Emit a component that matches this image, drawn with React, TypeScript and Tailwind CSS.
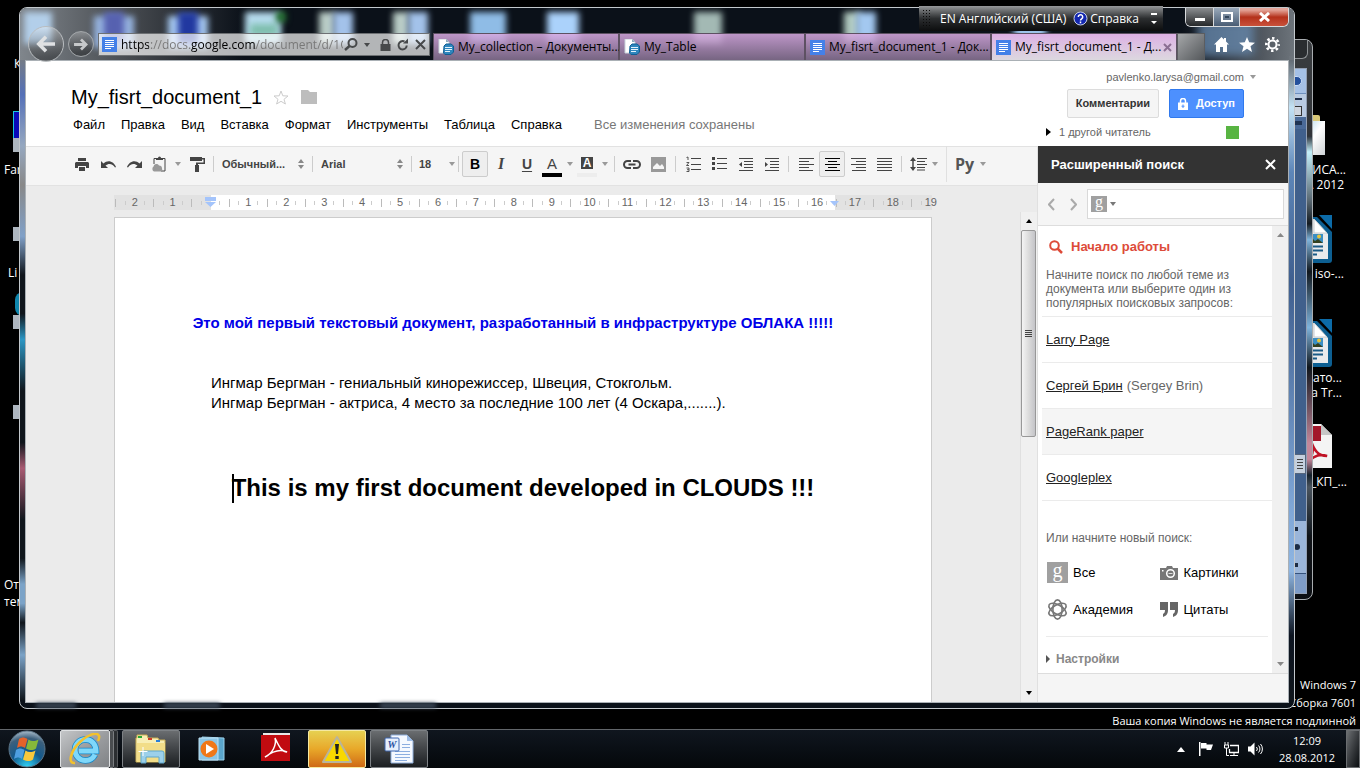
import type { ReactNode } from "react";

type Kids = { children?: ReactNode };

/* ---------- small shared glyphs ---------- */

function Caret({ className = "text-[#999]" }: { className?: string }) {
  return (
    <svg width="6" height="4" viewBox="0 0 6 4" className={"shrink-0 " + className} fill="currentColor" aria-hidden="true">
      <path d="M0 0h6L3 4z" />
    </svg>
  );
}

function UpDown() {
  return (
    <svg width="6" height="10" viewBox="0 0 6 10" fill="#888" className="pointer-events-none shrink-0" aria-hidden="true">
      <path d="M0 4h6L3 0zM0 6h6L3 10z" />
    </svg>
  );
}

function DocIcon() {
  return (
    <svg width="15" height="15" viewBox="0 0 15 15" className="shrink-0" aria-hidden="true">
      <rect width="15" height="15" fill="#4480e8" />
      <path d="M3 3.500h9M3 5.500h9M3 7.500h9M3 9.500h9M3 11.500h6" stroke="#fff" />
    </svg>
  );
}

function CollectionIcon() {
  return (
    <svg width="16" height="16" viewBox="0 0 16 16" className="shrink-0" aria-hidden="true">
      <path d="M1 0h7l3 3v11H1z" fill="#fff" stroke="#c9d4dc" />
      <path d="M8 0l3 3H8z" fill="#8ea9bc" />
      <path d="M6 7l2-2h5l2.500 2v6L13 15.500H7L5.500 14z" fill="#2f86bd" stroke="#0f5f94" />
      <path d="M7 8.500h7M7 10.500h7M7 12.500h5" stroke="#e4f3fc" />
    </svg>
  );
}

/* ---------- desktop behind the windows ---------- */

function WriterIcon() {
  return (
    <svg width="36" height="48" viewBox="0 0 36 48" aria-hidden="true">
      <path d="M2 2h18l15 15v28q0 3-3 3H2z" fill="#0d5f92" />
      <path d="M22 0h13v14z" fill="#0c6ba8" />
      <path d="M0 4h17l14 15v25H0z" fill="#e9eaec" />
      <path d="M17 4v14h13z" fill="#fff" stroke="#c8ccd0" />
      <rect x="8" y="19" width="18" height="9" fill="#3b8fc4" />
      <path d="M8 28l6-6 4 4 3-2 5 4z" fill="#33401f" />
      <circle cx="22" cy="21.500" r="2" fill="#e7c53c" />
      <path d="M4 31.500h22M4 35.500h22M4 39.500h16" stroke="#1a5a86" strokeWidth="2" />
    </svg>
  );
}

function PdfIcon() {
  return (
    <svg width="32" height="46" viewBox="0 0 32 46" aria-hidden="true">
      <path d="M0 1h20l11 11v33H0z" fill="#f4f4f4" />
      <path d="M20 1v11h11z" fill="#c6c6c6" />
      <rect width="20" height="15" y="3" fill="#a3172a" />
      <path d="M10 18c3 9 7 15 16 15-8-3-14 0-20 7 5-5 8-14 4-22z" fill="none" stroke="#c01225" strokeWidth="2.500" />
    </svg>
  );
}

function DesktopIcons() {
  const label = "absolute whitespace-nowrap text-xs leading-4 text-white ";
  return (
    <div className="absolute inset-0 overflow-hidden">
      <span className={label + "left-3.5 top-14"}>К</span>
      <div className="absolute left-[13px] top-[111px] h-7 w-4 border border-[#19c8e0] bg-[#0909b8]" />
      <div className="absolute left-[13px] top-[138px] h-3.5 w-4 bg-[#aeb6bf]" />
      <span className={label + "left-1 top-[162px]"}>Far</span>
      <div className="absolute left-[13px] top-[227px] h-3.5 w-4 bg-[#aeb6bf]" />
      <span className={label + "left-2 top-[265px]"}>Li</span>
      <div className="absolute left-[15px] top-[292px] h-6 w-4 rounded-full bg-[#0f86ad]" />
      <div className="absolute left-[13px] top-[315px] h-3.5 w-4 bg-[#aeb6bf]" />
      <div className="absolute left-[13px] top-[405px] h-3.5 w-4 bg-[#aeb6bf]" />
      <span className={label + "left-1 top-[577px]"}>От</span>
      <span className={label + "left-1 top-[594px]"}>тем</span>

      <div className="absolute right-[34px] top-[115px] h-6 w-4 rounded-xs bg-[#d9c878] mr-1.5" />
      <div className="absolute right-[35px] top-[121px] h-[34px] w-6 bg-linear-to-br from-[#9fd0e6] via-white to-[#cfd3d6]" />
      <span className={label + "right-3.5 top-[162px]"}>ИСА...</span>
      <span className={label + "right-4 top-[177px]"}>А 2012</span>
      <div className="absolute right-[27px] top-[215px]"><WriterIcon /></div>
      <span className={label + "right-4 top-[266px]"}>iso-...</span>
      <div className="absolute right-[27px] top-[319px]"><WriterIcon /></div>
      <span className={label + "right-[18px] top-[370px]"}>рато...</span>
      <span className={label + "right-[18px] top-[385px]"}>а Tr...</span>
      <div className="absolute right-[27px] top-[423px]"><PdfIcon /></div>
      <span className={label + "right-[13px] top-[474px]"}>_КП_...</span>

      <div className="absolute bottom-0 right-1 text-right text-[11px] text-white">
        <p className="leading-[18px]">Windows 7</p>
        <p className="leading-[18px]">Сборка 7601</p>
        <p className="leading-[17px]">Ваша копия Windows не является подлинной</p>
      </div>
    </div>
  );
}

function BackWindow() {
  return (
    <div className="absolute bottom-[129px] right-[47px] top-[39px] w-40 rounded-lg border border-[#a9adb0] bg-linear-to-b from-[#3a3d40] via-[#20242a] to-[#0c0f13] pr-1">
      <div className="ml-auto h-[19px] w-24 rounded-b-md border border-t-0 border-[#8f9396] bg-[#2a2d30]" />
      <div className="absolute bottom-[5px] right-[5px] top-7 flex w-3.5 flex-col items-center border border-[#93a0b4] bg-[#40608c]">
        <div className="flex h-6 w-full items-center bg-[#a5c1e6]"><i className="h-2.5 w-2 rounded-r-full border border-[#c8dcf6] bg-[#24509c]" /></div>
        <div className="h-6 w-full border-t border-[#6f90bd] bg-[#b9cbe2] pt-1"><i className="block h-0.5 w-2 bg-[#20304c]" /><i className="mt-1.5 block h-2.5 w-2 border border-[#333] bg-[#cfd6e0]" /></div>
        <div className="h-3 w-full bg-[#4a6a98] pt-1"><i className="block h-1 w-2 bg-[#1f3454]" /></div>
        <div className="flex-1" />
        <div className="flex h-5 w-3 flex-col justify-center gap-0.5 border border-[#55657c] bg-[#c5d0de] px-0.5">
          <i className="h-px bg-[#444]" /><i className="h-px bg-[#444]" /><i className="h-px bg-[#444]" /><i className="h-px bg-[#444]" />
        </div>
        <div className="h-[47px]" />
        <div className="flex h-13 w-full flex-col items-start justify-around bg-[#9bb6da]">
          <i className="size-1 bg-[#1c2c44]" /><i className="size-1.5 rounded-full bg-[#1c2c44]" /><i className="size-1 bg-[#1c2c44]" />
        </div>
        <div className="h-5 w-full border-t border-[#35527c] bg-[#7f9dc8]" />
      </div>
      <div className="absolute bottom-16 right-0 top-24 w-[5px] bg-linear-[180deg,#2a3038_0%,#c4f0fa_4%,#5b6a74_16%,#141a20_22%,#7fb4dc_26%,#10161c_34%,#7fb4dc_48%,#10161c_58%,#c4879a_77%,#c4879a_81%,#14202a_85%,#4a545e_88%,#10161c_100%]" />
    </div>
  );
}

/* ---------- browser frame ---------- */

function GlassBlobs() {
  const blob = "absolute h-8 blur-[3px] ";
  return (
    <div className="absolute inset-0 overflow-hidden rounded-t-md" aria-hidden="true">
      <div className="absolute inset-y-0 left-0 w-56 bg-linear-to-r from-[#80868c] via-[#45494e] to-transparent" />
      <div className={blob + "left-1 top-1 w-7 bg-[#b3cfea]"} />
      <div className={blob + "left-[74px] top-2 w-10 bg-[#97b4e0]"} />
      <div className={blob + "left-[84px] top-1 w-5 bg-[#5661b0]"} />
      <div className={blob + "left-[148px] top-2 w-10 bg-[#a6c9f2]"} />
      <div className={blob + "left-[158px] top-1 w-5 bg-[#2138a0]"} />
      <div className={blob + "left-[225px] top-1 w-9 bg-[#b7dcee]"} />
      <div className="absolute left-[230px] top-4 h-3 w-7 bg-[#7fbfae] blur-[3px]" />
      <div className="absolute left-[256px] top-1 h-2.5 w-2.5 bg-[#1c6b28] blur-[3px]" />
      <div className={blob + "left-[299px] top-1 w-4 bg-[#b9ccc6]"} />
      <div className={blob + "left-[313px] top-1 w-5 bg-[#a3c2ea]"} />
      <div className={blob + "left-[373px] top-1 w-4 bg-[#b9ccc6]"} />
      <div className={blob + "left-[388px] top-1 w-5 bg-[#a3c2ea]"} />
      <div className={blob + "left-[450px] top-1 w-9 bg-[#8fbce6]"} />
      <div className={blob + "left-[527px] top-1 w-8 bg-[#abd2fb]"} />
      <div className={blob + "left-[674px] top-1 w-7 bg-[#a3b9b4]"} />
      <div className={blob + "left-[824px] top-1 w-4 bg-[#b0c9bf]"} />
      <div className={blob + "left-[836px] top-1 w-5 bg-[#a3c8f0]"} />
      <div className={blob + "left-[994px] top-1 w-8 bg-[#9cc4ea]"} />
      <div className="absolute inset-y-0 right-0 w-28 bg-linear-to-r from-transparent to-[#6d747b]" />
      <div className="absolute right-10 top-3 h-9 w-14 bg-[#6e93bb] opacity-70 blur-[5px]" />
    </div>
  );
}

function NavButtons() {
  return (
    <div className="flex items-center gap-1">
      <button aria-label="Назад" className="flex size-9 items-center justify-center rounded-full border border-[#b9bdc0] bg-linear-to-b from-[#ffffff55] to-[#00000055]">
        <svg width="20" height="18" viewBox="0 0 22 20" fill="none" stroke="#dfe1e3" strokeWidth="4"><path d="M21 10H4M11 2l-8 8 8 8" /></svg>
      </button>
      <button aria-label="Вперед" className="flex size-[26px] items-center justify-center rounded-full border border-[#a4a8ab] bg-linear-to-b from-[#ffffff44] to-[#00000055]">
        <svg width="14" height="13" viewBox="0 0 15 14" fill="none" stroke="#c6c8ca" strokeWidth="3"><path d="M0 7h12M7.500 1.500L13 7l-5.500 5.500" /></svg>
      </button>
    </div>
  );
}

function AddressBar() {
  return (
    <form className="ml-1 flex h-[23px] w-[332px] items-center border border-[#6d7073] bg-[#ffffffb0] px-[3px]" onSubmit={(e) => e.preventDefault()}>
      <DocIcon />
      <input
        aria-label="Адрес"
        defaultValue="https://docs.google.com/document/d/1Q"
        className="ml-1 w-[222px] min-w-0 bg-linear-[90deg,#000_28px,#777_28px,#777_70px,#000_70px,#000_135px,#777_135px] bg-clip-text text-xs text-transparent outline-none"
      />
      <div className="ml-auto flex items-center gap-1.5 text-[#47494b]">
        <button aria-label="Поиск" className="flex items-center gap-1.5">
          <svg width="14" height="13" viewBox="0 0 14 13" fill="none" stroke="currentColor" strokeWidth="2"><circle cx="8.500" cy="5" r="4" /><path d="M5.500 8L1 12" strokeWidth="2.500" /></svg>
          <Caret className="text-[#47494b]" />
        </button>
        <svg width="11" height="12" viewBox="0 0 11 12" fill="currentColor" className="ml-1" aria-hidden="true"><path d="M.5 5h10v7H.5z" /><path d="M2.500 5V3.500a3 3 0 016 0V5" fill="none" stroke="currentColor" strokeWidth="1.500" /></svg>
        <button aria-label="Обновить">
          <svg width="12" height="13" viewBox="0 0 12 13" fill="none" stroke="currentColor" strokeWidth="2"><path d="M7.500 3.500A4.200 4.200 0 105.500 11.500a4.200 4.200 0 004.200-4" /><path d="M6 5.500h5V.5z" fill="currentColor" stroke="none" /></svg>
        </button>
        <button aria-label="Остановить">
          <svg width="11" height="11" viewBox="0 0 11 11" stroke="currentColor" strokeWidth="2"><path d="M1 1l9 9M10 1l-9 9" /></svg>
        </button>
      </div>
    </form>
  );
}

function Tab({ icon, label, active }: { icon: ReactNode; label: string; active?: boolean }) {
  return (
    <div
      className={
        "flex h-[27px] w-[186px] min-w-0 items-center border border-b-0 border-[#5d5162] text-xs text-black " +
        (active ? "bg-linear-to-b from-[#dcb0e4] to-[#dcd8df]" : "bg-linear-to-b from-[#d6a8e0e0] to-[#8a7495d8]")
      }
    >
      <button className="flex min-w-0 flex-1 items-center gap-1 pl-1">
        {icon}
        <span className="whitespace-nowrap">{label}</span>
      </button>
      {active && (
        <button aria-label="Закрыть вкладку" className="pr-1">
          <svg width="9" height="9" viewBox="0 0 9 9" stroke="#8b6f93" strokeWidth="2"><path d="M1 1l7 7M8 1L1 8" /></svg>
        </button>
      )}
    </div>
  );
}

function WindowButtons() {
  const b = "flex h-[18px] items-center justify-center border-r border-[#d8dadc] ";
  return (
    <div className="absolute right-[5px] top-0 flex overflow-hidden rounded-b-md border border-t-0 border-[#d8dadc]">
      <button aria-label="Свернуть" className={b + "w-7 bg-linear-to-b from-[#8b8e91] to-[#27292b]"}>
        <span className="mt-1 h-[3px] w-2.5 bg-white" />
      </button>
      <button aria-label="Развернуть" className={b + "w-[26px] bg-linear-to-b from-[#9aa9ba] to-[#4a5d74]"}>
        <span className="flex h-2.5 w-3 items-center justify-center border-2 border-white"><i className="h-0.5 w-1 bg-[#33465c]" /></span>
      </button>
      <button aria-label="Закрыть" className="flex h-[18px] w-12 items-center justify-center bg-linear-to-b from-[#e4a59a] from-10% via-[#b4301a] via-50% to-[#c9513a]">
        <svg width="11" height="10" viewBox="0 0 11 10" stroke="#fff" strokeWidth="3"><path d="M1 1l9 8M10 1L1 9" /></svg>
      </button>
    </div>
  );
}

function BrowserChrome() {
  return (
    <div className="relative h-[52px] shrink-0">
      <GlassBlobs />
      <div className="relative flex h-full items-end pl-2">
        <div className="-mb-0.5 self-end"><NavButtons /></div>
        <div className="mb-1"><AddressBar /></div>
        <div className="ml-[3px] flex min-w-0 items-end">
          <Tab icon={<CollectionIcon />} label="My_collection – Документы..." />
          <Tab icon={<CollectionIcon />} label="My_Table" />
          <Tab icon={<DocIcon />} label="My_fisrt_document_1 - Док..." />
          <Tab icon={<DocIcon />} label="My_fisrt_document_1 - Д..." active />
          <button aria-label="Новая вкладка" className="h-[27px] w-7 border border-b-0 border-[#5b5d60] bg-linear-to-br from-[#a6a8aa] to-[#55585b]" />
        </div>
        <div className="mb-2 ml-auto flex items-center gap-2.5 pr-3.5 text-white">
          <button aria-label="Домой"><svg width="15" height="15" viewBox="0 0 15 15" fill="currentColor"><path d="M7.500 0L0 7.500h2V15h4v-5h3v5h4V7.500h2L12 4.500V1h-2v1.500z" /></svg></button>
          <button aria-label="Избранное"><svg width="16" height="15" viewBox="0 0 16 15" fill="currentColor"><path d="M8 0l2.200 5.300 5.800.4-4.500 3.600L13 15l-5-3.200L3 15l1.500-5.700L0 5.700l5.800-.4z" /></svg></button>
          <button aria-label="Сервис"><svg width="15" height="15" viewBox="0 0 15 15" fill="none" stroke="currentColor"><circle cx="7.500" cy="7.500" r="4" strokeWidth="2" /><circle cx="7.500" cy="7.500" r="6.200" strokeWidth="2.600" strokeDasharray="2.400 2.470" strokeDashoffset="1.200" /></svg></button>
        </div>
      </div>
      <WindowButtons />
    </div>
  );
}

function LanguageBar() {
  return (
    <div className="absolute right-[197px] top-1.5 flex h-[25px] w-[244px] items-center bg-linear-to-b from-[#96989a] via-[#2c2e30] via-50% to-[#0c0d0e] px-1 text-xs text-white">
      <svg width="9" height="17" viewBox="0 0 9 17" stroke="#0b0b0b" strokeDasharray="1 2" aria-hidden="true">
        <path d="M0 .5h9M0 3.500h9M0 6.500h9M0 9.500h9M0 12.500h9M0 15.500h9" />
      </svg>
      <button className="ml-2 whitespace-nowrap">EN Английский (США)</button>
      <button className="ml-auto flex items-center gap-0.5">
        <svg width="15" height="15" viewBox="0 0 15 15" aria-hidden="true">
          <circle cx="7.500" cy="7.500" r="6.500" fill="#1428b0" stroke="#c8d0e8" />
          <path d="M5.300 6a2.200 2.200 0 113.500 1.700c-.8.6-1.300.9-1.300 1.800M7.500 10.500v1.700" fill="none" stroke="#fff" strokeWidth="1.500" />
        </svg>
        Справка
      </button>
      <button aria-label="Параметры" className="ml-3 mr-0.5">
        <svg width="6" height="12" viewBox="0 0 6 12" fill="#fff"><path d="M0 0h6v2H0zM0 8h6l-3 3z" /></svg>
      </button>
    </div>
  );
}

/* ---------- document editor ---------- */

const menus = ["Файл", "Правка", "Вид", "Вставка", "Формат", "Инструменты", "Таблица", "Справка"];

function DocHeader() {
  return (
    <header className="flex h-[85px] shrink-0 bg-white">
      <div className="flex flex-col pl-[45px] pt-[22px]">
        <div className="flex items-center">
          <h1 className="text-xl leading-7 text-black">My_fisrt_document_1</h1>
          <button aria-label="Пометить" className="ml-[11px]">
            <svg width="16" height="15" viewBox="0 0 16 15" fill="none" stroke="#ccc"><path d="M8 1l1.800 4.800 5.200.2-4 3.300L12.400 14 8 11.300 3.600 14 5 9.300 1 6l5.200-.2z" /></svg>
          </button>
          <button aria-label="Переместить в папку" className="ml-3">
            <svg width="16" height="14" viewBox="0 0 16 14" fill="#bdbdbd"><path d="M0 0h7l2 2h7v12H0z" /></svg>
          </button>
        </div>
        <nav className="flex gap-4 pl-0.5 pt-1.5 text-[13px] leading-4 text-black">
          {menus.map((m) => <button key={m} className="whitespace-nowrap">{m}</button>)}
          <span className="ml-4 whitespace-nowrap text-[#777]">Все изменения сохранены</span>
        </nav>
      </div>
      <div className="ml-auto flex w-[252px] flex-col pt-2">
        <button className="mr-8 flex items-center gap-1.5 self-end text-[11px] leading-4 text-[#666]">pavlenko.larysa@gmail.com <Caret /></button>
        <div className="mr-11 mt-1 flex gap-2.5 self-end text-[11px] font-bold">
          <button className="h-[29px] rounded-xs border border-[#dcdcdc] bg-[#f5f5f5] px-2 text-[#333]">Комментарии</button>
          <button className="flex h-[29px] items-center gap-2 rounded-xs border border-[#3079ed] bg-[#4d90fe] px-2 text-white">
            <svg width="10" height="12" viewBox="0 0 10 12" aria-hidden="true"><path d="M0 4.500h10V12H0z" fill="#fff" /><path d="M2.500 5V3a2.500 2.500 0 015 0v2" fill="none" stroke="#fff" strokeWidth="1.500" /><path d="M5 6.500v3.500M3.500 8.200h3" stroke="#4d90fe" /></svg>
            Доступ
          </button>
        </div>
        <div className="mr-[49px] mt-1.5 flex items-center pl-2.5 text-[11px] leading-4 text-[#666]">
          <svg width="5" height="8" viewBox="0 0 5 8" aria-hidden="true"><path d="M0 0l5 4-5 4z" /></svg>
          <span className="ml-2 whitespace-nowrap">1 другой читатель</span>
          <i className="ml-auto size-[13px] bg-[#58b442]" />
        </div>
      </div>
    </header>
  );
}

function Tool({ label, active, wide, children }: Kids & { label: string; active?: boolean; wide?: boolean }) {
  return (
    <button
      aria-label={label}
      className={
        "flex h-[26px] shrink-0 items-center justify-center text-[#444] " +
        (wide ? "gap-[5px] px-0.5 " : "w-[26px] ") +
        (active ? "rounded-xs border border-[#ccc] bg-[#eee] text-black" : "")
      }
    >
      {children}
    </button>
  );
}

const Sep = () => <i className="mx-1 h-4 w-px shrink-0 bg-[#ccc]" />;

function Lines({ d }: { d: string }) {
  return (
    <svg width="15" height="13" viewBox="0 0 15 13" fill="none" stroke="currentColor" aria-hidden="true">
      <path d={d} />
    </svg>
  );
}

function PickBox({ label, value, width, small }: { label: string; value: string; width: string; small?: boolean }) {
  return (
    <label className={"flex shrink-0 items-center " + width}>
      <select aria-label={label} className="min-w-0 flex-1 appearance-none bg-transparent text-[11px] font-bold text-[#444] outline-none">
        <option>{value}</option>
      </select>
      {small ? <Caret /> : <UpDown />}
    </label>
  );
}

function Toolbar() {
  return (
    <div className="flex h-10 shrink-0 items-center border-y border-[#e2e2e2] bg-[#f5f5f5] pb-1 pl-[43px]">
      <Tool label="Печать">
        <svg width="14" height="13" viewBox="0 0 14 13" fill="currentColor"><path d="M3 0h8v3H3zM1 4h12l1 1v5h-3V8H3v2H0V5z" /><path d="M4 9h6v4H4z" /></svg>
      </Tool>
      <Tool label="Отменить">
        <svg width="15" height="9" viewBox="0 0 15 9" fill="currentColor"><path d="M0 1v7h7L4.500 5.500C8 2.500 12 4 14 7.500l1-.5C13 1.500 7-1 2.500 3.500z" /></svg>
      </Tool>
      <Tool label="Повторить">
        <svg width="15" height="9" viewBox="0 0 15 9" fill="currentColor"><path d="M15 1v7H8l2.500-2.500C7 2.500 3 4 1 7.500L0 7C2 1.500 8-1 12.500 3.500z" /></svg>
      </Tool>
      <button aria-label="Буфер обмена" className="flex h-[26px] w-[37px] shrink-0 items-center gap-[9px] pl-[5px]">
        <svg width="14" height="16" viewBox="0 0 14 16"><path d="M2 8V2.500h11v12.500H9" fill="none" stroke="#444" /><path d="M4 2h2a1.500 1.500 0 013 0h2v2H4z" fill="#444" /><path d="M2 15.500a3 3 0 01-.5-5 3 3 0 015.500-1 3 3 0 013 3 2.500 2.500 0 01-1 3z" fill="#999" /></svg>
        <Caret />
      </button>
      <Tool label="Копировать форматирование">
        <svg width="15" height="15" viewBox="0 0 15 15" fill="currentColor"><path d="M0 0h12v4H0zM12 1h3v6H8v1h1v7H5V8h1V5.500h7.500V2.500H12z" /></svg>
      </Tool>
      <i className="ml-[3px] h-4 w-px shrink-0 bg-[#ccc]" />
      <PickBox label="Стиль" value="Обычный..." width="ml-2 w-[82px]" />
      <i className="ml-2 h-4 w-px shrink-0 bg-[#ccc]" />
      <PickBox label="Шрифт" value="Arial" width="ml-2 w-[82px]" />
      <i className="ml-2 h-4 w-px shrink-0 bg-[#ccc]" />
      <PickBox label="Размер шрифта" value="18" width="ml-[7px] w-9" small />
      <i className="mx-[3px] h-4 w-px shrink-0 bg-[#ccc]" />
      <Tool label="Полужирный" active><span className="text-sm font-bold">B</span></Tool>
      <Tool label="Курсив"><span className="font-['Liberation_Serif',serif] text-base font-bold italic">I</span></Tool>
      <Tool label="Подчеркнутый"><span className="text-sm font-bold underline underline-offset-2">U</span></Tool>
      <Tool label="Цвет текста" wide>
        <span className="-mb-1.5 flex w-5 flex-col items-center text-[15px] leading-[14px]">A<i className="mt-0.5 h-1 w-5 bg-black" /></span>
        <Caret />
      </Tool>
      <Tool label="Цвет фона текста" wide>
        <span className="-mb-1.5 flex w-5 flex-col items-center">
          <b className="flex h-3 w-3 items-center justify-center bg-[#444] text-xs leading-none text-white">A</b>
          <i className="mt-1 h-1 w-5 bg-[#ededed]" />
        </span>
        <Caret />
      </Tool>
      <Sep />
      <Tool label="Ссылка">
        <svg width="18" height="9" viewBox="0 0 18 9" fill="none" stroke="currentColor" strokeWidth="2"><path d="M8 1H4.500a3.500 3.500 0 000 7H8M10 1h3.500a3.500 3.500 0 010 7H10M5.500 4.500h7" /></svg>
      </Tool>
      <Tool label="Изображение">
        <svg width="15" height="15" viewBox="0 0 15 15"><path d="M0 0h15v15H0z" fill="#999" /><path d="M2 12V10l4-4 3 3 2-2 2 3v2z" fill="#f5f5f5" /></svg>
      </Tool>
      <Sep />
      <Tool label="Нумерованный список">
        <svg width="15" height="16" viewBox="0 0 15 16" fill="none" stroke="currentColor"><path d="M5 2.500h10M5 8.500h10M5 13.500h10" /><path d="M.5 1.500L2 1v3M.5 6.500H3L.5 9.500H3M.5 12H3v3.500H.5M1 13.700h2" strokeWidth=".9" /></svg>
      </Tool>
      <Tool label="Маркированный список">
        <svg width="15" height="14" viewBox="0 0 15 14" stroke="currentColor"><path d="M5 1.500h10M5 6.500h10M5 11.500h10" /><path d="M0 1.500h3M0 6.500h3M0 11.500h3" strokeWidth="3" /></svg>
      </Tool>
      <Tool label="Уменьшить отступ">
        <svg width="15" height="13" viewBox="0 0 15 13" stroke="currentColor"><path d="M1 .5h14M6 3.500h9M6 6.500h9M6 9.500h9M1 12.500h14" /><path d="M4 4v5L1 6.500z" fill="currentColor" stroke="none" /></svg>
      </Tool>
      <Tool label="Увеличить отступ">
        <svg width="15" height="13" viewBox="0 0 15 13" stroke="currentColor"><path d="M1 .5h14M6 3.500h9M6 6.500h9M6 9.500h9M1 12.500h14" /><path d="M1 4v5l3-2.500z" fill="currentColor" stroke="none" /></svg>
      </Tool>
      <Sep />
      <Tool label="По левому краю"><Lines d="M0 .5h15M0 3.500h10M0 6.500h15M0 9.500h10M0 12.500h14" /></Tool>
      <Tool label="По центру" active><Lines d="M0 .5h15M3 3.500h9M0 6.500h15M3 9.500h9M0 12.500h15" /></Tool>
      <Tool label="По правому краю"><Lines d="M0 .5h15M5 3.500h10M0 6.500h15M5 9.500h10M1 12.500h14" /></Tool>
      <Tool label="По ширине"><Lines d="M0 .5h15M0 3.500h15M0 6.500h15M0 9.500h15M0 12.500h15" /></Tool>
      <Sep />
      <Tool label="Межстрочный интервал" wide>
        <svg width="17" height="14" viewBox="0 0 17 14" stroke="currentColor" className="ml-0.5"><path d="M7 1.500h10M7 4.500h8M7 7.500h10M7 10.500h8M7 13h8" /><path d="M3 2v10" strokeWidth="1.500" /><path d="M0 4l3-4 3 4zM0 10l3 4 3-4z" fill="currentColor" stroke="none" /></svg>
        <Caret />
      </Tool>
      <i className="ml-1.5 h-9 w-px shrink-0 bg-[#e0e0e0]" />
      <button aria-label="Способ ввода" className="ml-2 flex items-center gap-1.5 font-['Open_Sans',sans-serif] text-base font-bold leading-6 text-[#555]">Ру <Caret /></button>
    </div>
  );
}

const marks = ["2", "1", "", ...Array.from({ length: 19 }, (_, i) => String(i + 1))];

function Ruler() {
  return (
    <div className="relative mx-auto mt-[9px] flex h-[15px] w-[818px] shrink-0 bg-[#e2e2e2] text-[11px] text-[#666]">
      <div className="ml-[97px] mr-[97px] flex-1 bg-white" />
      <div className="absolute inset-y-0 -left-[3px] -right-[13px] grid grid-cols-22">
        {marks.map((m, i) => (
          <div key={i} className="grid grid-cols-4 place-items-center">
            <i className="h-2 w-px bg-[#bbb]" />
            <i className="h-1 w-px bg-[#ccc]" />
            <span className="flex w-2 justify-center leading-[15px]">{m}</span>
            {i < 21 ? <i className="h-1 w-px bg-[#ccc]" /> : null}
          </div>
        ))}
      </div>
      <svg width="11" height="11" viewBox="0 0 11 11" className="absolute left-[91px] top-0.5" fill="#a4c4fb" aria-hidden="true"><path d="M0 0h11v4H0zM0 5h11l-5.500 5z" /></svg>
      <svg width="9" height="6" viewBox="0 0 9 6" className="absolute right-[93px] top-1.5" fill="#a4c4fb" aria-hidden="true"><path d="M0 0h9L4.500 5z" /></svg>
    </div>
  );
}

function Canvas() {
  return (
    <div className="flex min-h-0 flex-1 bg-[#ebebeb]">
      <div className="flex min-w-0 flex-1 flex-col overflow-hidden">
        <Ruler />
        <article className="mx-auto mt-[7px] w-[818px] flex-1 border border-b-0 border-[#ccc] bg-white px-24 pt-[95px] text-[15px] leading-5 text-black">
          <p className="-ml-5 whitespace-nowrap text-center font-bold text-[#0000e8]">Это мой первый текстовый документ, разработанный в инфраструктуре ОБЛАКА !!!!!</p>
          <p className="mt-10">Ингмар Бергман - гениальный кинорежиссер, Швеция, Стокгольм.</p>
          <p>Ингмар Бергман - актриса, 4 место за последние 100 лет (4 Оскара,.......).</p>
          <p className="mt-[59px] flex items-center justify-center whitespace-nowrap text-2xl font-bold">
            <i className="-mr-0.5 h-[29px] w-0.5 bg-black" />
            This is my first document developed in CLOUDS !!!
          </p>
        </article>
      </div>
      <div className="mt-[26px] flex w-[17px] shrink-0 flex-col items-center border-l border-[#e0e0e0] bg-[#f0f0f0] pr-px">
        <div className="flex h-[18px] items-center"><svg width="6" height="4" viewBox="0 0 6 4"><path d="M0 4h6L3 0z" /></svg></div>
        <div className="flex h-[207px] w-[15px] flex-col items-center justify-center gap-px rounded-xs border border-[#989898] bg-linear-to-r from-[#f4f4f4] via-[#dcdcdc] to-[#c4c4c8]">
          <i className="h-px w-[7px] bg-[#444]" /><i className="h-px w-[7px] bg-[#444]" /><i className="h-px w-[7px] bg-[#444]" /><i className="h-px w-[7px] bg-[#444]" />
        </div>
        <div className="mt-auto flex h-[18px] items-center"><svg width="6" height="4" viewBox="0 0 6 4"><path d="M0 0h6L3 4z" /></svg></div>
      </div>
    </div>
  );
}

/* ---------- research side panel ---------- */

const GoogleG = ({ big }: { big?: boolean }) => (
  <span className={"flex shrink-0 items-center justify-center bg-[#a0a0a0] font-['Liberation_Serif',serif] text-white " + (big ? "size-[21px] pb-1.5 text-xl leading-none" : "size-4 pb-1 text-base leading-none")}>g</span>
);

function SidePanel() {
  const row = "flex h-[46px] items-center border-b border-[#ebebeb] pl-1 text-[13px] text-[#222]";
  return (
    <aside className="flex w-[251px] shrink-0 flex-col border-l border-[#e0e0e0] bg-[#f5f5f5]">
      <div className="flex h-[37px] shrink-0 items-center justify-between bg-[#333] pl-[13px] pr-3 text-[13px] font-bold text-white">
        <h2>Расширенный поиск</h2>
        <button aria-label="Закрыть панель"><svg width="11" height="11" viewBox="0 0 11 11" stroke="#fff" strokeWidth="2"><path d="M1 1l9 9M10 1l-9 9" /></svg></button>
      </div>
      <div className="flex h-[43px] shrink-0 items-center border-b border-[#ddd] pl-2.5 pr-1">
        <button aria-label="Назад"><svg width="7" height="13" viewBox="0 0 7 13" fill="none" stroke="#aaa" strokeWidth="2"><path d="M6 1L1 6.500 6 12" /></svg></button>
        <button aria-label="Вперед" className="ml-[15px]"><svg width="7" height="13" viewBox="0 0 7 13" fill="none" stroke="#aaa" strokeWidth="2"><path d="M1 1l5 5.500L1 12" /></svg></button>
        <div className="ml-2.5 flex h-[30px] min-w-0 flex-1 items-center gap-[3px] border border-[#d9d9d9] bg-white pl-[3px]">
          <GoogleG />
          <Caret className="text-[#777]" />
          <input aria-label="Поиск" className="min-w-0 flex-1 outline-none" />
        </div>
      </div>
      <div className="flex min-h-0 flex-1 border-b border-[#ddd] bg-white">
        <div className="min-w-0 flex-1 pl-1">
          <h3 className="flex h-[42px] items-center gap-2 pl-[7px] text-[13px] font-bold text-[#dd4b39]">
            <svg width="14" height="14" viewBox="0 0 14 14" fill="none" stroke="currentColor" strokeWidth="2" aria-hidden="true"><circle cx="5.500" cy="5.500" r="4.300" /><path d="M8.500 8.500L13 13" strokeWidth="2.500" /></svg>
            Начало работы
          </h3>
          <p className="whitespace-nowrap pl-1 text-xs leading-[14px] text-[#666]">Начните поиск по любой теме из<br />документа или выберите один из<br />популярных поисковых запросов:</p>
          <div className="mt-1.5 border-t border-[#ebebeb]">
            <div className={row}><a href="#larry" className="underline">Larry Page</a></div>
            <div className={row}><a href="#sergey" className="underline">Сергей Брин</a><span className="ml-1 text-[#666]">(Sergey Brin)</span></div>
            <div className={row + " bg-[#f5f5f5]"}><a href="#pagerank" className="underline">PageRank paper</a></div>
            <div className={row}><a href="#googleplex" className="underline">Googleplex</a></div>
          </div>
          <p className="mt-[29px] pl-1 text-xs leading-4 text-[#666]">Или начните новый поиск:</p>
          <div className="mt-2 grid grid-cols-2 pl-[5px] text-[13px] text-black">
            <button className="flex h-[37px] items-center gap-[5px]"><GoogleG big />Все</button>
            <button className="flex h-[37px] items-center gap-1.5">
              <svg width="18" height="14" viewBox="0 0 18 14" aria-hidden="true"><path d="M0 2h6l1-2h5l1 2h5v12H0z" fill="#777" /><circle cx="10.500" cy="7.500" r="3.800" fill="#777" stroke="#fff" strokeWidth="1.500" /><path d="M8.500 7.500h4" stroke="#ddd" /><path d="M2 4h1.500v1.500H2z" fill="#fff" /></svg>
              Картинки
            </button>
            <button className="flex h-[37px] items-center gap-[5px]">
              <svg width="21" height="21" viewBox="0 0 21 21" fill="none" stroke="#777" strokeWidth="1.600" aria-hidden="true">
                <ellipse cx="10.500" cy="10.500" rx="9.600" ry="4.600" transform="rotate(30 10.500 10.500)" />
                <ellipse cx="10.500" cy="10.500" rx="9.600" ry="4.600" transform="rotate(90 10.500 10.500)" />
                <ellipse cx="10.500" cy="10.500" rx="9.600" ry="4.600" transform="rotate(150 10.500 10.500)" />
              </svg>
              Академия
            </button>
            <button className="flex h-[37px] items-center gap-1.5">
              <svg width="18" height="15" viewBox="0 0 18 15" fill="#666" aria-hidden="true"><path d="M0 0h8v8c0 4-2 6-5 7v-3c1.500-1 2-2 2-4H0zM10 0h8v8c0 4-2 6-5 7v-3c1.500-1 2-2 2-4h-5z" /></svg>
              Цитаты
            </button>
          </div>
          <div className="ml-1 mr-1 mt-2 border-t border-[#ebebeb]" />
          <button className="flex items-center gap-1.5 pl-1 pt-3.5 text-xs font-bold leading-4 text-[#888]">
            <svg width="4" height="8" viewBox="0 0 4 8" fill="#555" aria-hidden="true"><path d="M0 0l4 4-4 4z" /></svg>
            Настройки
          </button>
        </div>
        <div className="flex w-4 shrink-0 flex-col items-center justify-between bg-[#f0f0f0] py-[7px]">
          <svg width="7" height="4" viewBox="0 0 7 4" fill="#888"><path d="M0 4h7L3.500 0z" /></svg>
          <svg width="7" height="4" viewBox="0 0 7 4" fill="#888"><path d="M0 0h7L3.500 4z" /></svg>
        </div>
      </div>
      <div className="h-7 shrink-0" />
    </aside>
  );
}

function BrowserWindow() {
  return (
    <main className="absolute bottom-5 left-[19px] right-[65px] top-[7px] flex flex-col rounded-lg border border-[#c3c8cc] bg-[#0b1119]">
      <div className="absolute bottom-2 left-0 top-12 w-[5px] bg-linear-[180deg,#777c80_0%,#5470b8_6%,#96a8c0_14%,#888_20%,#80a0c8_28%,#10161c_34%,#10161c_40%,#2b96c4_44%,#10161c_52%,#10161c_60%,#a85a72_64%,#10161c_72%,#10161c_78%,#7ba3c8_82%,#7ba3c8_85%,#10161c_88%,#7ba3c8_93%,#10161c_100%]" />
      <div className="absolute bottom-2 right-0 top-12 w-[5px] bg-linear-[180deg,#5c636b_0%,#c4e2f4_8%,#5d86b8_18%,#3f5f8f_35%,#7fa6d6_70%,#8fb6e2_80%,#0c1420_90%,#10161c_100%]" />
      <div className="absolute bottom-0 left-4 h-[5px] w-10 bg-[#3d4a5a] blur-[2px]" />
      <div className="absolute bottom-0 left-36 h-[5px] w-14 bg-[#3d4a5a] blur-[2px]" />
      <div className="absolute bottom-0 left-[360px] h-[5px] w-14 bg-[#3d4a5a] blur-[2px]" />
      <BrowserChrome />
      <div className="mx-[5px] mb-[5px] flex min-h-0 flex-1 flex-col border border-[#aab0b5] bg-white font-['Liberation_Sans',Arial,sans-serif]">
        <DocHeader />
        <div className="flex min-h-0 flex-1">
          <div className="flex min-w-0 flex-1 flex-col">
            <Toolbar />
            <Canvas />
          </div>
          <SidePanel />
        </div>
      </div>
    </main>
  );
}

/* ---------- taskbar ---------- */

function TaskButton({ label, tone, children }: Kids & { label: string; tone: string }) {
  return <button aria-label={label} className={"flex h-[38px] items-center justify-center rounded-xs border " + tone}>{children}</button>;
}

const glassTone = "w-[58px] border-[#7d8185] bg-linear-to-b from-[#6a6d70] to-[#1c1f22]";

function Taskbar() {
  return (
    <footer className="relative flex h-[39px] shrink-0 items-end border-t border-[#62666a] bg-linear-to-b from-[#10161f] to-[#05080b] text-xs text-white">
      <button aria-label="Пуск" className="ml-2 self-center">
        <svg width="38" height="38" viewBox="0 0 38 38">
          <defs>
            <radialGradient id="orb" cx=".5" cy="1" r="1"><stop offset="0" stopColor="#2fd5f8" /><stop offset=".45" stopColor="#12598c" /><stop offset=".8" stopColor="#3c5f7c" /><stop offset="1" stopColor="#a9bccb" /></radialGradient>
          </defs>
          <circle cx="19" cy="19" r="18" fill="url(#orb)" stroke="#5c7588" />
          <path d="M11 9c3-2 5-2 8.500 0l-2.500 9c-3-2-5-2-8 0z" fill="#e4622a" />
          <path d="M20.500 9.500c3 2 6 2 10 0l-2.500 9c-3 2-6 2-10 0z" fill="#86b83a" />
          <path d="M8 20c3-2 5-2 8.500 0l-2.500 9c-3-2-5-2-8 0z" fill="#4e9fe0" />
          <path d="M17.500 20.500c3 2 6 2 10 0l-2.500 9c-3 2-6 2-10 0z" fill="#f8c83c" />
        </svg>
      </button>
      <div className="ml-3.5 flex">
        <TaskButton label="Internet Explorer" tone="w-[50px] border-[#dfe1e3] bg-linear-to-br from-[#c4c6c8] via-[#9b9da0] to-[#808386]">
          <svg width="32" height="32" viewBox="0 0 32 32" fill="none">
            <path d="M26 21.500c-2 4-5.500 6-9.500 6C10.500 27.500 6 23 6 17S10.500 6.500 16.500 6.500 27 11 27 18H10" stroke="#1787c8" strokeWidth="6.500" />
            <path d="M26 21.500c-2 4-5.500 6-9.500 6C10.500 27.500 6 23 6 17S10.500 6.500 16.500 6.500 27 11 27 18H10" stroke="#7fd8fa" strokeWidth="5" />
            <path d="M6 30C-2 31 2 18 10 10S28-2 30 3c.5 1.500 0 3-1 5" stroke="#f3c12c" strokeWidth="2.500" />
          </svg>
        </TaskButton>
        <i className="h-[38px] w-1 rounded-r-xs border border-l-0 border-[#7b7e81] bg-[#4a4d50]" />
        <i className="h-[38px] w-1 rounded-r-xs border border-l-0 border-[#55585b] bg-[#2b2e31]" />
      </div>
      <div className="ml-1 flex">
        <TaskButton label="Проводник" tone={glassTone}>
          <svg width="34" height="30" viewBox="0 0 34 30">
            <path d="M3 4V1h10l1 3h10l1 2h6v22H2V4z" fill="#f8eeb4" stroke="#c9ad52" />
            <path d="M3 9h28v19H3z" fill="#f2dd88" />
            <path d="M4 2h4v2H4z" fill="#28a838" /><path d="M14 4h4v2h-4z" fill="#d03a26" /><path d="M22 6h4v2h-4z" fill="#2a7fd8" />
            <path d="M7 29V19q0-2 2-2h19q2 0 2 2v10h-5v-6H12v6z" fill="#9cd0ea" stroke="#5fa7cc" />
            <path d="M9 13v9M4.500 17.500h9" stroke="#fff" />
          </svg>
        </TaskButton>
        <TaskButton label="Проигрыватель" tone="w-[64px] border-transparent">
          <svg width="28" height="26" viewBox="0 0 28 26">
            <path d="M4 1l22 1v22H4z" fill="#5ba6cc" stroke="#9ad0ea" /><path d="M1 2h19v22H1z" fill="#8cc6e6" stroke="#bfe2f4" />
            <circle cx="11" cy="13" r="8.500" fill="#f07818" /><path d="M8 8v10l8-5z" fill="#fff" />
          </svg>
        </TaskButton>
        <TaskButton label="Adobe Reader" tone="w-[64px] border-transparent">
          <svg width="30" height="28" viewBox="0 0 30 28" className="mb-1">
            <path d="M2 0h27v26H2z" fill="#e9e9e9" /><path d="M0 2h29v26H0z" fill="#c10b10" />
            <path d="M14 5c3 6 6 14 12 14-6-3-14-1-22 5 7-3 12-12 10-19z" fill="none" stroke="#fff" strokeWidth="1.500" />
          </svg>
        </TaskButton>
        <TaskButton label="Предупреждение" tone="w-[58px] border-[#f6e9a0] bg-linear-to-b from-[#e6d050] via-[#e8a829] to-[#cf6a16]">
          <svg width="32" height="28" viewBox="0 0 32 28">
            <path d="M16 2l14 25H2z" fill="#f8d800" stroke="#b8b49c" strokeWidth="2" strokeLinejoin="round" /><path d="M14 9h4l-1 10h-2zM14.300 21h3.400v3h-3.400z" fill="#222" />
          </svg>
        </TaskButton>
        <div className="ml-1">
          <TaskButton label="Microsoft Word" tone={glassTone}>
            <svg width="30" height="30" viewBox="0 0 30 30">
              <path d="M7 1h16l6 6v22H7z" fill="#f5f9ff" stroke="#8faedb" /><path d="M23 1v6h6z" fill="#9fbde6" />
              <path d="M18 10.500h8M18 13.500h8M11 17.500h15M11 20.500h15M11 23.500h15M11 26.500h12" stroke="#8caee0" />
              <rect x="1" y="4" width="14" height="13" rx="1" fill="#e6effc" stroke="#3f67b0" />
              <text x="8" y="14" textAnchor="middle" fontSize="10" fontWeight="bold" fontStyle="italic" fill="#2a51a0" fontFamily="Liberation Serif, serif">W</text>
            </svg>
          </TaskButton>
        </div>
      </div>
      <div className="ml-auto flex h-full items-center">
        <button aria-label="Скрытые значки"><svg width="8" height="5" viewBox="0 0 8 5" fill="#fff"><path d="M0 5h8L4 0z" /></svg></button>
        <button aria-label="Центр поддержки" className="ml-3.5"><svg width="15" height="14" viewBox="0 0 15 14" fill="#fff"><path d="M0 0h1.500v14H0zM2 1h5.500v1.500H14L12 8H7.500V6.500H2z" /></svg></button>
        <button aria-label="Сеть" className="ml-2.5"><svg width="15" height="15" viewBox="0 0 15 15" fill="none" stroke="#fff"><path d="M6 3.500h8.500v7h-9V7" strokeWidth="1.300" /><path d="M10 11v2M6 13.500h8M1 0v3M4 0v3M.5 3h4v3h-4zM2.500 6v7.500H5" /></svg></button>
        <button aria-label="Громкость" className="ml-[9px]"><svg width="15" height="14" viewBox="0 0 15 14" fill="none" stroke="#fff"><path d="M0 4.500h2.500L6.500.5v13l-4-4H0z" fill="#fff" stroke="none" /><path d="M8.500 5a3 3 0 010 4M10.500 3.500a5 5 0 010 7M12.500 2a7.500 7.500 0 010 10" /></svg></button>
        <div className="ml-4 mr-[11px] w-14 whitespace-nowrap text-center text-[11px] leading-[17px]"><p>12:09</p><p>28.08.2012</p></div>
        <button aria-label="Показать рабочий стол" className="h-[38px] w-3.5 border border-[#6a6d70] bg-linear-to-br from-[#6d7073] to-[#0c0f12]" />
      </div>
    </footer>
  );
}

export default function App() {
  return (
    <div className="flex h-screen flex-col overflow-hidden bg-black font-['Open_Sans','Noto_Sans',sans-serif]">
      <div className="relative min-h-0 flex-1">
        <DesktopIcons />
        <BackWindow />
        <BrowserWindow />
        <LanguageBar />
      </div>
      <Taskbar />
    </div>
  );
}
